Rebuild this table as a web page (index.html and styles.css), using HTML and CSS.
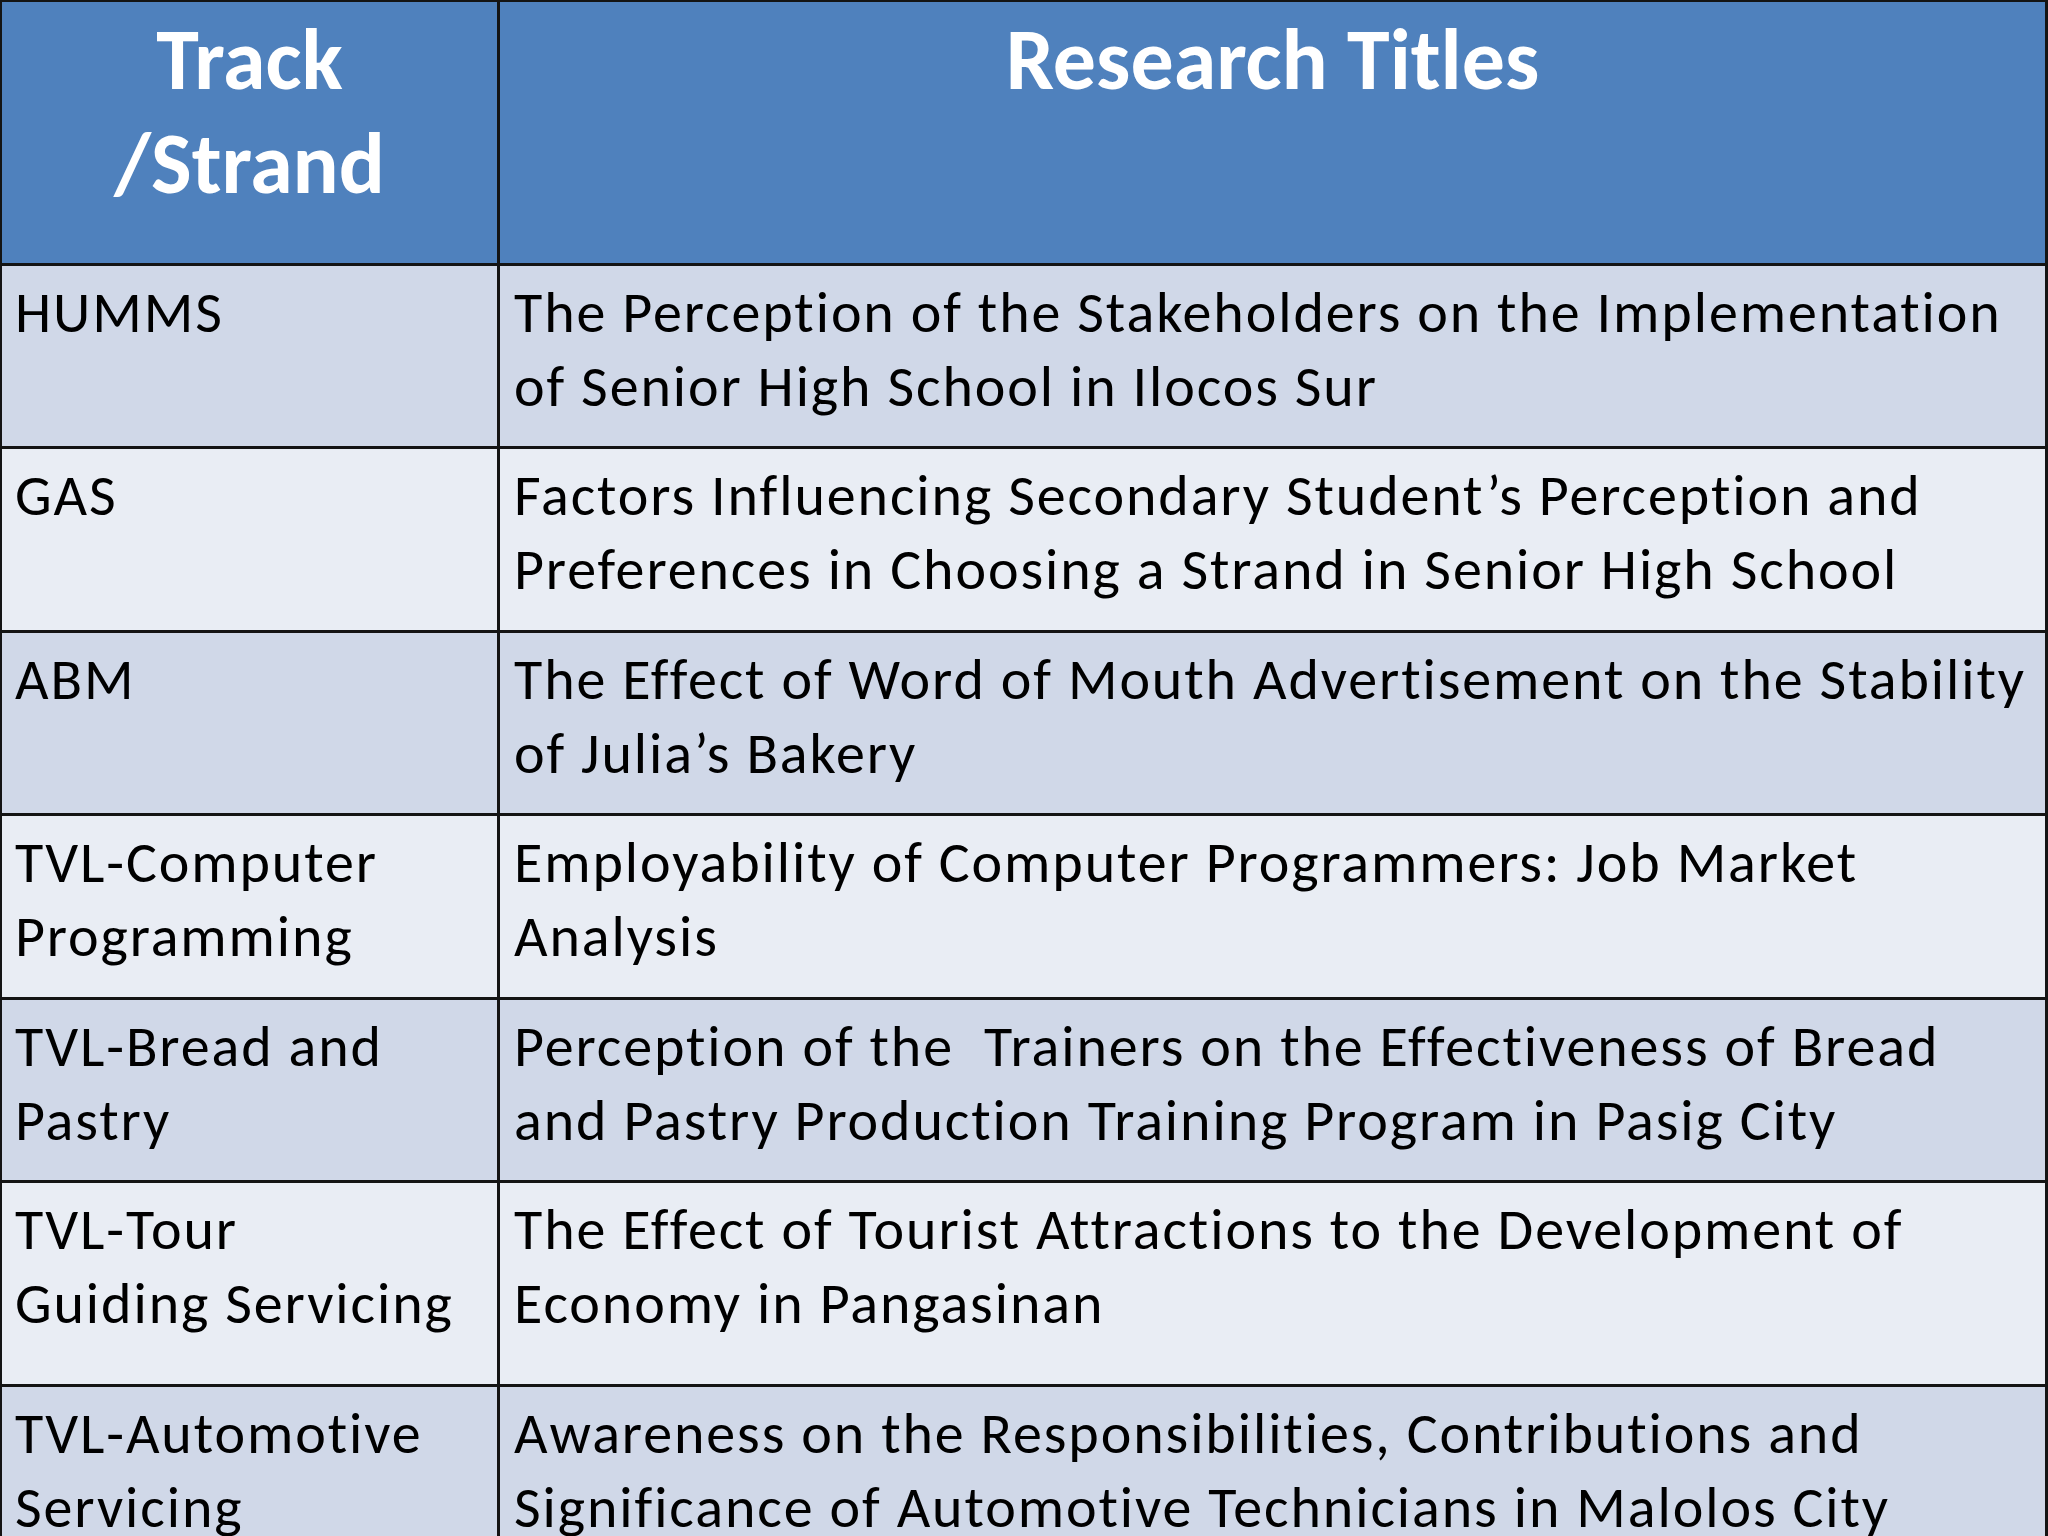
FILE: index.html
```html
<!DOCTYPE html>
<html lang="en">
<head>
<meta charset="utf-8">
<title>Track / Strand Research Titles</title>
<link rel="stylesheet" href="styles.css">
</head>
<body>
<div class="sheet">
  <div class="cell head head-left"><span>Track<br>/Strand</span></div>
  <div class="cell head head-right"><span>Research Titles</span></div>

  <div class="cell odd left">HUMMS</div>
  <div class="cell odd right">The Perception of the Stakeholders on the Implementation<br>of Senior High School in Ilocos Sur</div>

  <div class="cell even left">GAS</div>
  <div class="cell even right">Factors Influencing Secondary Student’s Perception and<br>Preferences in Choosing a Strand in Senior High School</div>

  <div class="cell odd left">ABM</div>
  <div class="cell odd right">The Effect of Word of Mouth Advertisement on the Stability<br>of Julia’s Bakery</div>

  <div class="cell even left">TVL-Computer<br>Programming</div>
  <div class="cell even right">Employability of Computer Programmers: Job Market<br>Analysis</div>

  <div class="cell odd left">TVL-Bread and<br>Pastry</div>
  <div class="cell odd right">Perception of the &nbsp;Trainers on the Effectiveness of Bread<br>and Pastry Production Training Program in Pasig City</div>

  <div class="cell even left">TVL-Tour<br>Guiding Servicing</div>
  <div class="cell even right">The Effect of Tourist Attractions to the Development of<br>Economy in Pangasinan</div>

  <div class="cell odd left">TVL-Automotive<br>Servicing</div>
  <div class="cell odd right">Awareness on the Responsibilities, Contributions and<br>Significance of Automotive Technicians in Malolos City</div>
</div>
</body>
</html>
```

FILE: styles.css
```css
html, body {
  margin: 0;
  padding: 0;
  background: #ffffff;
  overflow: hidden;
}

body {
  width: 2048px;
  height: 1536px;
  font-family: "Carlito", "Calibri", "Lato", sans-serif;
  font-variant-ligatures: none;
  color: #000000;
}

.sheet {
  display: grid;
  width: 2048px;
  box-sizing: border-box;
  grid-template-columns: 498px 1fr;
  grid-template-rows: 264px 183px 184px 183px 184px 183px 204px 200px;
  border-top: 2px solid #141414;
  border-left: 2px solid #141414;
}

.cell {
  box-sizing: border-box;
  border-right: 3px solid #141414;
  border-bottom: 3px solid #141414;
  font-size: 58px;
  line-height: 74px;
  letter-spacing: 1.9px;
  padding: 10px 0 0 14px;
  white-space: nowrap;
  overflow: hidden;
}

.left {
  padding-left: 13px;
}

.head {
  background: #4f81bd;
  color: #ffffff;
  font-weight: bold;
  font-size: 86px;
  line-height: 104px;
  letter-spacing: 0;
  text-align: center;
  padding: 6px 0 0 0;
}

.odd {
  background: #d0d8e8;
}

.even {
  background: #e9edf4;
}
```
